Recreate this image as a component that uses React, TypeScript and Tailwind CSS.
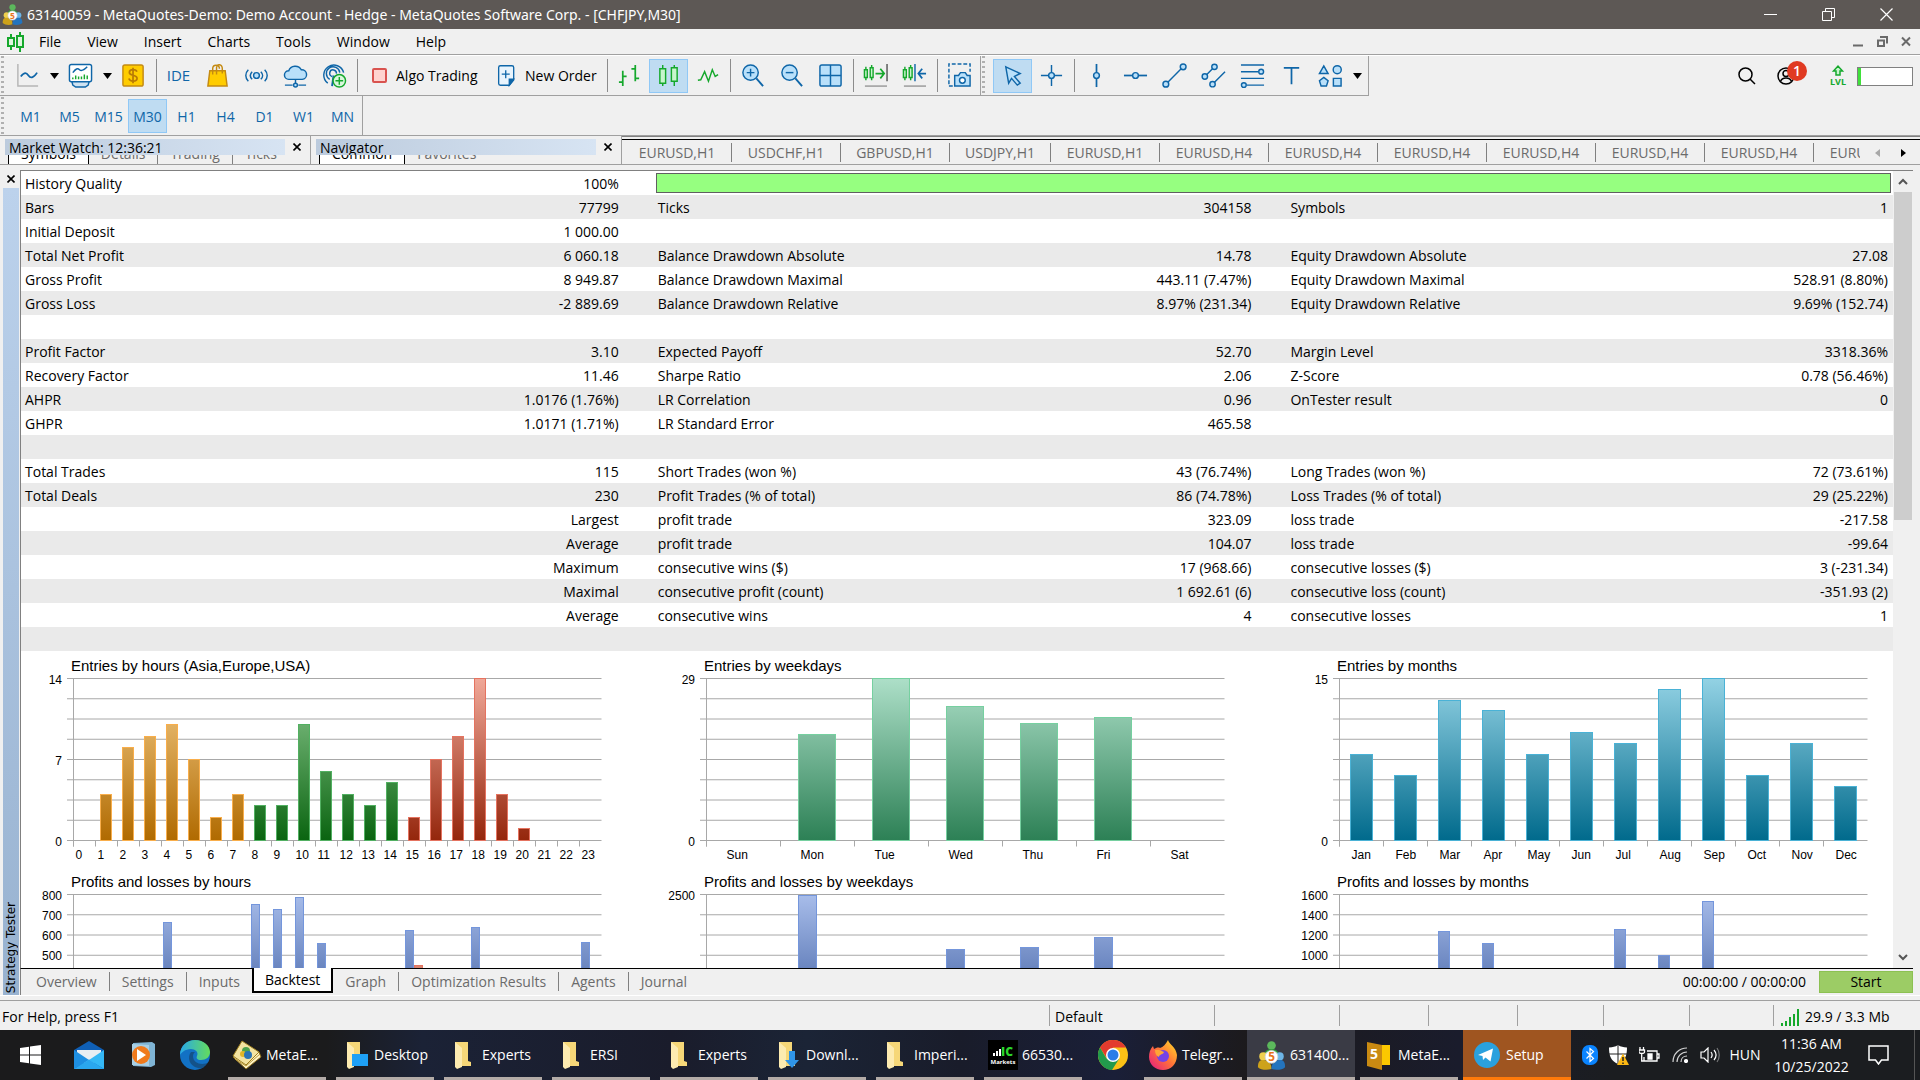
import React, { useState } from "react";

interface StatCell {
  label: string;
  value: string;
}

interface Bar {
  slot: number;
  value: number;
  color: string;
  offset?: number;
}

interface ChartProps {
  id: string;
  title: string;
  max: number;
  slotWidth: number;
  barWidth: number;
  barOffset: number;
  labelOffset: number;
  labels: string[];
  bars: Bar[];
  yLabels: { step: number; text: string }[];
}

const BLUE = "#0f66a8";
const LIGHT = "#b9e0fa";
const GREEN = "#15a82c";

const c = (label: string, value: string): StatCell => ({ label, value });
const empty = c("", "");

const stats: StatCell[][] = [
  [c("Bars", "77799"), c("Ticks", "304158"), c("Symbols", "1")],
  [c("Initial Deposit", "1 000.00"), empty, empty],
  [c("Total Net Profit", "6 060.18"), c("Balance Drawdown Absolute", "14.78"), c("Equity Drawdown Absolute", "27.08")],
  [c("Gross Profit", "8 949.87"), c("Balance Drawdown Maximal", "443.11 (7.47%)"), c("Equity Drawdown Maximal", "528.91 (8.80%)")],
  [c("Gross Loss", "-2 889.69"), c("Balance Drawdown Relative", "8.97% (231.34)"), c("Equity Drawdown Relative", "9.69% (152.74)")],
  [empty, empty, empty],
  [c("Profit Factor", "3.10"), c("Expected Payoff", "52.70"), c("Margin Level", "3318.36%")],
  [c("Recovery Factor", "11.46"), c("Sharpe Ratio", "2.06"), c("Z-Score", "0.78 (56.46%)")],
  [c("AHPR", "1.0176 (1.76%)"), c("LR Correlation", "0.96"), c("OnTester result", "0")],
  [c("GHPR", "1.0171 (1.71%)"), c("LR Standard Error", "465.58"), empty],
  [empty, empty, empty],
  [c("Total Trades", "115"), c("Short Trades (won %)", "43 (76.74%)"), c("Long Trades (won %)", "72 (73.61%)")],
  [c("Total Deals", "230"), c("Profit Trades (% of total)", "86 (74.78%)"), c("Loss Trades (% of total)", "29 (25.22%)")],
  [c("", "Largest"), c("profit trade", "323.09"), c("loss trade", "-217.58")],
  [c("", "Average"), c("profit trade", "104.07"), c("loss trade", "-99.64")],
  [c("", "Maximum"), c("consecutive wins ($)", "17 (968.66)"), c("consecutive losses ($)", "3 (-231.34)")],
  [c("", "Maximal"), c("consecutive profit (count)", "1 692.61 (6)"), c("consecutive loss (count)", "-351.93 (2)")],
  [c("", "Average"), c("consecutive wins", "4"), c("consecutive losses", "1")],
  [empty, empty, empty],
];

const palettes: Record<string, { top: string; bottom: string; line: string }> = {
  orange: { top: "#f5cd8a", bottom: "#b06a00", line: "#f9ae4b" },
  green: { top: "#8fcb92", bottom: "#0a6410", line: "#52b062" },
  red: { top: "#f0a898", bottom: "#94260c", line: "#e57360" },
  sea: { top: "#addfc8", bottom: "#2c8055", line: "#76d0a0" },
  teal: { top: "#93d2e4", bottom: "#006a8c", line: "#4ab2d6" },
  blue: { top: "#a8bdea", bottom: "#20438d", line: "#7496dc" },
  coral: { top: "#f0b8a8", bottom: "#b8452c", line: "#e57360" },
};

const entryHours = [0, 4, 8, 9, 10, 7, 2, 4, 3, 3, 10, 6, 4, 3, 5, 2, 7, 9, 14, 4, 1, 0, 0, 0];
const hourBars: Bar[] = entryHours.map((value, slot) => ({
  slot,
  value,
  color: slot < 8 ? "orange" : slot < 15 ? "green" : "red",
}));
const dayBars: Bar[] = [0, 19, 29, 24, 21, 22, 0].map((value, slot) => ({ slot, value, color: "sea" }));
const monthBars: Bar[] = [8, 6, 13, 12, 8, 10, 9, 14, 15, 6, 9, 5].map((value, slot) => ({ slot, value, color: "teal" }));

const profitHours: Bar[] = [
  { slot: 4, value: 663, color: "blue" },
  { slot: 8, value: 750, color: "blue" },
  { slot: 9, value: 727, color: "blue" },
  { slot: 10, value: 787, color: "blue" },
  { slot: 11, value: 560, color: "blue" },
  { slot: 15, value: 624, color: "blue" },
  { slot: 15, value: 450, color: "coral", offset: 9 },
  { slot: 18, value: 638, color: "blue" },
  { slot: 23, value: 565, color: "blue" },
];
const profitDays: Bar[] = [
  { slot: 1, value: 2480, color: "blue" },
  { slot: 3, value: 1652, color: "blue" },
  { slot: 4, value: 1675, color: "blue" },
  { slot: 5, value: 1840, color: "blue" },
];
const profitMonths: Bar[] = [
  { slot: 2, value: 1235, color: "blue" },
  { slot: 3, value: 1120, color: "blue" },
  { slot: 6, value: 1257, color: "blue" },
  { slot: 7, value: 998, color: "blue" },
  { slot: 8, value: 1530, color: "blue" },
];

const hours = Array.from({ length: 24 }, (_, i) => String(i));
const days = ["Sun", "Mon", "Tue", "Wed", "Thu", "Fri", "Sat"];
const months = ["Jan", "Feb", "Mar", "Apr", "May", "Jun", "Jul", "Aug", "Sep", "Oct", "Nov", "Dec"];

const chartTabs = [
  "EURUSD,H1", "USDCHF,H1", "GBPUSD,H1", "USDJPY,H1", "EURUSD,H1", "EURUSD,H4",
  "EURUSD,H4", "EURUSD,H4", "EURUSD,H4", "EURUSD,H4", "EURUSD,H4", "EURUSD,H4",
];

const Chart: React.FC<ChartProps> = ({ id, title, max, slotWidth, barWidth, barOffset, labelOffset, labels, bars, yLabels }) => {
  const left = 52.5;
  const top = 27.5;
  const height = 162;
  const bottom = top + height;
  const right = left + slotWidth * labels.length;

  return (
    <svg width="633" height="216" className="block shrink-0 font-['Liberation_Sans',sans-serif]">
      <defs>
        {Object.entries(palettes).map(([name, p]) => (
          <linearGradient key={name} id={`${id}-${name}`} gradientUnits="userSpaceOnUse" x1="0" y1={top} x2="0" y2={bottom}>
            <stop offset="0" stopColor={p.top} />
            <stop offset="1" stopColor={p.bottom} />
          </linearGradient>
        ))}
      </defs>
      <text x="50" y="20" fontSize="15">{title}</text>
      {Array.from({ length: 9 }, (_, i) => (
        <line key={i} x1="46" x2={right} y1={top + (i * height) / 8} y2={top + (i * height) / 8} stroke="#a8a8a8" />
      ))}
      <line x1={left} x2={left} y1={top} y2={bottom + 6} stroke="#a8a8a8" />
      {labels.map((label, i) => (
        <g key={label}>
          <line x1={left + i * slotWidth} x2={left + i * slotWidth} y1={bottom} y2={bottom + 6} stroke="#a8a8a8" />
          <text x={left + i * slotWidth + labelOffset} y={bottom + 18} fontSize="12">{label}</text>
        </g>
      ))}
      {yLabels.map((l) => (
        <text key={l.text} x="41" y={top + (l.step * height) / 8 + 5} fontSize="12" textAnchor="end">{l.text}</text>
      ))}
      {bars.filter((b) => b.value > 0).map((b, i) => {
        const h = (b.value / max) * height;
        return (
          <rect
            key={i}
            x={left + b.slot * slotWidth + barOffset + (b.offset ?? 0)}
            y={Math.round(bottom - h - 0.5) + 0.5}
            width={barWidth}
            height={Math.round(h)}
            fill={`url(#${id}-${b.color})`}
            stroke={palettes[b.color].line}
          />
        );
      })}
    </svg>
  );
};

const Icon: React.FC<{ children: React.ReactNode; size?: number }> = ({ children, size = 25 }) => (
  <svg width={size} height={size} viewBox="0 0 26 26" fill="none" stroke={BLUE} strokeWidth="1.5" className="shrink-0">
    {children}
  </svg>
);

const ToolButton: React.FC<{ label: string; active?: boolean; children: React.ReactNode }> = ({ label, active, children }) => (
  <button
    aria-label={label}
    className={
      "flex h-[34px] w-[39px] shrink-0 items-center justify-center border " +
      (active ? "border-[#90c8f6] bg-[#bfdcf2]" : "border-transparent")
    }
  >
    {children}
  </button>
);

const Caret: React.FC<{ label: string }> = ({ label }) => (
  <button aria-label={label} className="flex w-[14px] shrink-0 items-center justify-center">
    <svg width="9" height="6"><path d="M0 0h9L4.500 6z" fill="#000" /></svg>
  </button>
);

const Separator: React.FC = () => (
  <div className="flex h-[33px] w-[6px] shrink-0 justify-center">
    <div className="w-px bg-[#8c8c8c]" />
  </div>
);

const Grip: React.FC = () => (
  <div className="ml-px w-[3px] self-stretch bg-[repeating-linear-gradient(180deg,#b0b0b0_0_2px,transparent_2px_5px)]" />
);

// MetaTrader emblem: three people around a coin
const MetaTraderLogo: React.FC<{ size: number }> = ({ size }) => (
  <svg width={size} height={size} viewBox="0 0 30 32" className="shrink-0">
    <circle cx="15" cy="5" r="4.800" fill="#5cb85c" />
    <path d="M7 17c0-6 3-8 8-8s8 2 8 8z" fill="#2f9e3a" />
    <circle cx="6" cy="17" r="4.500" fill="#eed04e" />
    <path d="M0 29c0-6 2-8 6-8 5 0 9 3 9 10-5 1.500-12 1-15-2z" fill="#cda21a" />
    <circle cx="24" cy="17" r="4.500" fill="#6db5e6" />
    <path d="M30 29c0-6-2-8-6-8-5 0-9 3-9 10 5 1.500 12 1 15-2z" fill="#2474bd" />
    <circle cx="15" cy="17.500" r="7" fill="#fff" stroke="#d5d5d5" />
    <text x="15" y="22.500" fontSize="13" fontWeight="700" textAnchor="middle" fill="#e8731c">5</text>
  </svg>
);

const TitleBar: React.FC = () => (
  <header className="flex h-[29px] shrink-0 items-center bg-[#5d5855] pr-[5px] text-white">
    <div className="flex w-[27px] pl-[2px]"><MetaTraderLogo size={21} /></div>
    <h1 className="flex-1 text-sm font-normal font-['Noto_Sans',sans-serif]">63140059 - MetaQuotes-Demo: Demo Account - Hedge - MetaQuotes Software Corp. - [CHFJPY,M30]</h1>
    <button aria-label="Minimize" className="flex w-[58px] justify-center">
      <svg width="13" height="13" stroke="#fff"><path d="M0 6.500h13" /></svg>
    </button>
    <button aria-label="Restore" className="flex w-[58px] justify-center">
      <svg width="13" height="13" stroke="#fff" fill="none"><path d="M.5 3.500h9v9h-9zM3.500 3V.5h9v9H10" /></svg>
    </button>
    <button aria-label="Close" className="flex w-[58px] justify-center">
      <svg width="13" height="13" stroke="#fff" strokeWidth="1.200"><path d="M.5.5l12 12M12.500.5l-12 12" /></svg>
    </button>
  </header>
);

const MenuBar: React.FC = () => (
  <nav className="flex h-[26px] shrink-0 items-center border-b border-b-[#a0a0a0] pr-[2px] text-sm">
    <div className="flex w-[26px] pl-[7px]">
      <svg width="18" height="20" fill="none" stroke={GREEN} strokeWidth="2">
        <path d="M4 2v4M4 14v4M13 0v4M13 15v5" />
        <path d="M1 6h6v8H1z" fill="#dff6df" />
        <path d="M10 4h6v11h-6z" fill="#dff6df" />
      </svg>
    </div>
    {["File", "View", "Insert", "Charts", "Tools", "Window", "Help"].map((item) => (
      <button key={item} className="px-[13px]">{item}</button>
    ))}
    <div className="ml-auto flex">
      <button aria-label="Minimize chart" className="flex w-6 justify-center">
        <svg width="11" height="11"><path d="M0 9.500h10" stroke="#6a6a6a" strokeWidth="2" /></svg>
      </button>
      <button aria-label="Restore chart" className="flex w-6 justify-center">
        <svg width="11" height="11" fill="none" stroke="#6a6a6a" strokeWidth="2"><path d="M1 4.500h6v5.500H1zM3 1h7v6.500" /></svg>
      </button>
      <button aria-label="Close chart" className="flex w-6 justify-center">
        <svg width="10" height="11" stroke="#6a6a6a" strokeWidth="2"><path d="M1 1.500l8 8M9 1.500l-8 8" /></svg>
      </button>
    </div>
  </nav>
);

const Toolbar: React.FC = () => (
  <div className="flex h-[41px] shrink-0 items-stretch border-t border-t-white text-sm">
    <div className="flex items-center border-r border-b border-[#a0a0a0] pr-px">
      <Grip />
      <div className="w-1" />
      <ToolButton label="Line studies">
        <Icon><path d="M3 1v23h21" stroke="#b5b5b5" /><path d="M6 14c4-5 6-4 8-1s5 3 9-3" strokeWidth="1.800" /></Icon>
      </ToolButton>
      <Caret label="More charts" />
      <ToolButton label="Indicators">
        <Icon>
          <path d="M4 19l1 4 3 2h10l3-2 1-4" fill="#cfe3f2" />
          <rect x="1.500" y="1.500" width="23" height="18" rx="2" fill="#fff" />
          <path d="M5 10c3-4 5-5 7-3s4 1 8-3" />
          <path d="M5 17v-2M8 17v-4M11 17v-3M14 17v-3M17 17v-5M20 17v-4" stroke={GREEN} />
        </Icon>
      </ToolButton>
      <Caret label="More indicators" />
      <ToolButton label="Trade levels">
        <Icon>
          <rect x="2" y="2" width="21" height="22" rx="2" fill="#fc0" stroke="#c48a12" />
          <path d="M16.500 9c-.5-1.600-2-2-4-2-2.500 0-3.800 1-3.800 2.800 0 4 8 1.800 8 6 0 2-1.700 3-4.200 3-2.200 0-3.800-.8-4.300-2.600M12.500 5v16" stroke="#b97a05" strokeWidth="1.800" />
        </Icon>
      </ToolButton>
      <Separator />
      <button className="h-[34px] w-[39px] text-[15px] text-[#0f66a8]">IDE</button>
      <ToolButton label="Market">
        <Icon>
          <path d="M5 8h16l2 16H3z" fill="#fc0" stroke="#c48a12" />
          <path d="M8 12V6c0-5 7-5 7 0M12 12V5c0-5 6-4 6 1v5" stroke="#c48a12" />
        </Icon>
      </ToolButton>
      <ToolButton label="Signals">
        <Icon>
          <circle cx="13" cy="13" r="3" fill={LIGHT} />
          <path d="M8.500 9c-2.500 2.500-2.500 5.500 0 8M17.500 9c2.500 2.500 2.500 5.500 0 8M4.500 7c-3.500 3.500-3.500 8.500 0 12M21.500 7c3.500 3.500 3.500 8.500 0 12" />
        </Icon>
      </ToolButton>
      <ToolButton label="Virtual hosting">
        <Icon>
          <path d="M6 17a4.500 4.500 0 0 1 0-9 7 6.500 0 0 1 13-1 5 5 0 0 1 1 10z" fill={LIGHT} />
          <path d="M13 17v4M2 23h8M16 23h8" /><circle cx="13" cy="23" r="2" fill={LIGHT} />
        </Icon>
      </ToolButton>
      <ToolButton label="Copy trading">
        <Icon>
          <path d="M6 21A10.500 10.500 0 1 1 22.500 10M8 17A7 7 0 1 1 18.500 10M10.500 14a3.500 3.500 0 1 1 4.500-3" />
          <path d="M12 13l-1.500 11" strokeWidth="2" />
          <circle cx="18" cy="18.500" r="6.500" fill="#d9f7dc" stroke={GREEN} /><path d="M18 14.500v8M14 18.500h8" stroke={GREEN} />
        </Icon>
      </ToolButton>
      <Separator />
      <button className="flex h-[34px] w-[128px] items-center gap-[9px] pl-[12px]">
        <span className="h-[15px] w-[15px] rounded-[2px] border-2 border-[#d9534f] bg-[#ffd3cf]" />
        Algo Trading
      </button>
      <button className="flex h-[34px] w-[116px] items-center gap-[6px] pl-[8px]">
        <Icon size={23}>
          <path d="M5 2h13a2 2 0 0 1 2 2v14l-5 6H5a2 2 0 0 1-2-2V4a2 2 0 0 1 2-2z" fill="#e8f4fd" />
          <path d="M20 17h-5v7z" fill={BLUE} /><path d="M11 7v9M6.500 11.500h9" />
        </Icon>
        New Order
      </button>
      <Separator />
      <ToolButton label="Bar chart">
        <Icon><path d="M6 8v16M6 14h4M2 20h4M19 2v17M15 6h4M19 16h4" stroke={GREEN} strokeWidth="1.800" /></Icon>
      </ToolButton>
      <ToolButton label="Candlesticks" active>
        <Icon>
          <path d="M7 2v22M19 2v22" stroke={GREEN} />
          <path d="M4 6h6v15H4zM16 5h6v14h-6z" fill="#c8f5cd" stroke={GREEN} />
        </Icon>
      </ToolButton>
      <ToolButton label="Line chart">
        <Icon><path d="M3 18l3-.5 4-8.500 4 10 4-12 3 7 3-2" stroke={GREEN} /></Icon>
      </ToolButton>
      <Separator />
      <ToolButton label="Zoom in">
        <Icon><circle cx="11" cy="10" r="8" fill={LIGHT} /><path d="M17 16l7 8" strokeWidth="2" /><path d="M11 6v8M7 10h8" /></Icon>
      </ToolButton>
      <ToolButton label="Zoom out">
        <Icon><circle cx="11" cy="10" r="8" fill={LIGHT} /><path d="M17 16l7 8" strokeWidth="2" /><path d="M7 10h8" /></Icon>
      </ToolButton>
      <ToolButton label="Tile windows">
        <Icon><rect x="2" y="2" width="22" height="22" rx="2" fill={LIGHT} /><path d="M13 2v22M2 13h22" /></Icon>
      </ToolButton>
      <Separator />
      <ToolButton label="Auto scroll">
        <Icon>
          <path d="M3 4v14M9 2v16" stroke={GREEN} /><path d="M1.500 7h3v8h-3zM7.500 5h3v10h-3z" fill="#c8f5cd" stroke={GREEN} />
          <path d="M13 11h9M18 6l4 5-4 5" stroke={GREEN} strokeWidth="1.800" /><path d="M25 1v18" stroke="#555" /><path d="M2 24h23" stroke="#999" />
        </Icon>
      </ToolButton>
      <ToolButton label="Chart shift">
        <Icon>
          <path d="M3 4v14M9 2v16" stroke={GREEN} /><path d="M1.500 7h3v8h-3zM7.500 5h3v10h-3z" fill="#c8f5cd" stroke={GREEN} />
          <path d="M13.500 1v18" /><path d="M25 11h-8M21 6l-4 5 4 5" strokeWidth="1.800" /><path d="M2 24h23" stroke="#999" />
        </Icon>
      </ToolButton>
      <Separator />
      <ToolButton label="Screenshot">
        <Icon>
          <path d="M6 24H2V1h22v8" strokeDasharray="4 2" />
          <path d="M8 13h4l2-3h5l2 3h3v11H8z" fill={LIGHT} /><circle cx="16" cy="18" r="3" fill="#fff" />
        </Icon>
      </ToolButton>
    </div>
    <div className="flex items-center border-r border-b border-[#a0a0a0] pr-[4px]">
      <Grip />
      <div className="w-2" />
      <ToolButton label="Cursor" active>
        <Icon><path d="M6 4l15 7-6 3 6 7-3 2-6-7-3 5z" fill={LIGHT} /></Icon>
      </ToolButton>
      <ToolButton label="Crosshair">
        <Icon><path d="M13 2v22M2 13h22" /><circle cx="13" cy="13" r="3" fill={LIGHT} /></Icon>
      </ToolButton>
      <Separator />
      <ToolButton label="Vertical line">
        <Icon><path d="M13 1v24" strokeWidth="1.800" /><circle cx="13" cy="13" r="3" fill={LIGHT} /></Icon>
      </ToolButton>
      <ToolButton label="Horizontal line">
        <Icon><path d="M1 13h24" strokeWidth="1.800" /><circle cx="13" cy="13" r="3" fill={LIGHT} /></Icon>
      </ToolButton>
      <ToolButton label="Trendline">
        <Icon><path d="M4 22L22 4" /><circle cx="4" cy="22" r="3" fill={LIGHT} /><circle cx="22" cy="4" r="3" fill={LIGHT} /></Icon>
      </ToolButton>
      <ToolButton label="Channel">
        <Icon>
          <path d="M4 14L14 4M12 22L25 9" />
          <circle cx="4" cy="14" r="2.800" fill={LIGHT} /><circle cx="14" cy="4" r="2.800" fill={LIGHT} /><circle cx="12" cy="22" r="2.800" fill={LIGHT} />
        </Icon>
      </ToolButton>
      <ToolButton label="Fibonacci">
        <Icon>
          <path d="M1 2h24M1 9h18M1 16h24M7 23h18" />
          <circle cx="22" cy="9" r="2.500" fill={LIGHT} /><circle cx="4" cy="23" r="2.500" fill={LIGHT} />
        </Icon>
      </ToolButton>
      <ToolButton label="Text">
        <Icon><path d="M5 5h16M13 5v17" strokeWidth="1.800" /></Icon>
      </ToolButton>
      <ToolButton label="Shapes">
        <Icon>
          <path d="M6 3l4.500 8h-9zM6 15l4.500 3.500-1.700 5.500H3.200L1.500 18.500zM16 16h8v8h-8z" fill={LIGHT} /><circle cx="20" cy="7" r="4.200" fill={LIGHT} />
        </Icon>
      </ToolButton>
      <Caret label="More shapes" />
    </div>
    <div className="ml-auto flex items-center pr-[7px]">
      <button aria-label="Search" className="flex w-[39px] justify-center">
        <svg width="18" height="18" fill="none" stroke="#000" strokeWidth="1.500"><circle cx="7.500" cy="7.500" r="6.500" /><path d="M12 12l5 5" /></svg>
      </button>
      <button aria-label="Account, 1 message" className="relative flex w-[39px] justify-center">
        <svg width="18" height="18" fill="none" stroke="#000" strokeWidth="1.500">
          <circle cx="9" cy="9" r="8" /><circle cx="9" cy="6.500" r="3" /><path d="M3.500 14.500c1-3 3-3.500 5.500-3.500s4.500.5 5.500 3.500" />
        </svg>
        <span className="absolute -top-[6px] left-[21px] flex h-5 w-5 items-center justify-center rounded-full bg-[#e03a22] text-sm font-semibold text-white">1</span>
      </button>
      <div className="ml-[13px] flex w-[39px] justify-center">
        <svg width="24" height="24" fill="none" stroke={GREEN} strokeWidth="1.500">
          <path d="M10 11V7H7.500L12 2l4.500 5H14v4z" fill="#c8f5cd" />
          <text x="12" y="21" fontSize="9" fontWeight="700" textAnchor="middle" fill={GREEN} stroke="none">LVL</text>
        </svg>
      </div>
      <div className="flex h-[19px] w-[56px] border border-[#808080] bg-white">
        <div className="w-[3px] bg-[#3fe03a]" />
      </div>
    </div>
  </div>
);

const Timeframes: React.FC = () => {
  const [frame, setFrame] = useState("M30");
  return (
    <div className="flex h-10 shrink-0 border-b border-b-[#a0a0a0] text-[#0f66a8]">
      <div className="flex items-center border-r border-r-[#a0a0a0] pt-px">
        <Grip />
        <div className="w-[7px]" />
        {["M1", "M5", "M15", "M30", "H1", "H4", "D1", "W1", "MN"].map((f) => (
          <button
            key={f}
            onClick={() => setFrame(f)}
            className={
              "h-[34px] w-[39px] border pt-px text-sm " +
              (f === frame ? "border-[#90c8f6] bg-[#bfdcf2]" : "border-transparent")
            }
          >
            {f}
          </button>
        ))}
      </div>
    </div>
  );
};

const CloseMark: React.FC<{ label: string }> = ({ label }) => (
  <button aria-label={label} className="flex w-5 items-center justify-center">
    <svg width="8" height="8" stroke="#000" strokeWidth="1.600"><path d="M.5.5l7 7M7.500.5l-7 7" /></svg>
  </button>
);

const DockPanel: React.FC<{ title: string; tabs: string[] }> = ({ title, tabs }) => (
  <section className="flex w-[311px] shrink-0 flex-col border-r border-r-[#a0a0a0] pt-[3px] pl-[5px]">
    <div className="flex h-4 justify-between pr-[3px]">
      <h2 className="w-[280px] bg-linear-to-r from-[#bccbdd] to-[#d7e4f3] pl-1 text-sm leading-[17px]">{title}</h2>
      <CloseMark label={`Close ${title}`} />
    </div>
    <div className="flex h-[9px] items-end overflow-hidden pl-[3px] text-sm leading-5 text-[#6b6b6b]">
      {tabs.map((tab, i) => (
        <button
          key={tab}
          className={
            "h-5 border-r px-[12px] pb-[2px] " +
            (i === 0 ? "border-l border-black bg-white text-black" : i < tabs.length - 1 ? "border-r-[#808080]" : "border-transparent")
          }
        >
          {tab}
        </button>
      ))}
    </div>
  </section>
);

const Docks: React.FC = () => (
  <div className="flex h-[29px] shrink-0 border-b border-b-[#a0a0a0]">
    <DockPanel title="Market Watch: 12:36:21" tabs={["Symbols", "Details", "Trading", "Ticks"]} />
    <DockPanel title="Navigator" tabs={["Common", "Favorites"]} />
    <div className="flex min-w-0 flex-1 border-t border-t-[#808080] pt-[2px]">
      <div className="flex min-w-0 flex-1 items-center border-t border-t-black pt-px pl-px">
        <div className="flex min-w-0 flex-1 overflow-hidden text-sm text-[#6b6b6b]">
          {chartTabs.map((tab, i) => (
            <button
              key={i}
              className={
                "h-[19px] shrink-0 border-r border-r-[#808080] leading-[19px] " +
                (tab.startsWith("USDJPY") ? "w-[101px]" : "w-[109px]")
              }
            >
              {tab}
            </button>
          ))}
        </div>
        <div className="flex w-[60px] shrink-0 items-center justify-center gap-[21px]">
          <button aria-label="Previous tabs"><svg width="5" height="8"><path d="M5 0v8L0 4z" fill="#a8a8a8" /></svg></button>
          <button aria-label="Next tabs"><svg width="5" height="8"><path d="M0 0v8l5-4z" fill="#000" /></svg></button>
        </div>
      </div>
    </div>
  </div>
);

const StatsTable: React.FC = () => (
  <table className="w-full table-fixed text-sm">
    <colgroup>
      <col className="w-[16.9%]" />
      <col className="w-[16.9%]" />
      <col className="w-[16.9%]" />
      <col className="w-[16.9%]" />
      <col className="w-[16.2%]" />
      <col className="w-[16.2%]" />
    </colgroup>
    <tbody>
      <tr className="h-6">
        <td className="pt-[2px] pl-1">History Quality</td>
        <td className="pt-[2px] pr-[35px] text-right">100%</td>
        <td colSpan={4} className="p-0 pr-[2px] pl-[2px]">
          <div className="h-5 border border-[#606060] bg-[#96ff80]" />
        </td>
      </tr>
      {stats.map((row, i) => (
        <tr key={i} className="h-6 odd:bg-white even:bg-[#eaeaea]">
          {row.map((cell, j) => (
            <React.Fragment key={j}>
              <td className="pt-[2px] pl-1 whitespace-nowrap">{cell.label}</td>
              <td className={"pt-[2px] text-right whitespace-nowrap " + (j < 2 ? "pr-[35px]" : "pr-[5px]")}>{cell.value}</td>
            </React.Fragment>
          ))}
        </tr>
      ))}
    </tbody>
  </table>
);

const Report: React.FC = () => (
  <div className="flex min-h-0 flex-1 border-t border-l border-t-[#808080] border-l-[#808080] bg-white">
    <div className="min-w-0 flex-1 overflow-hidden">
      <StatsTable />
      <div className="grid grid-cols-[633fr_633fr_606fr]">
        <div className="min-w-0">
          <Chart id="eh" title="Entries by hours (Asia,Europe,USA)" max={14} slotWidth={22} barWidth={11} barOffset={5} labelOffset={2} labels={hours} bars={hourBars}
            yLabels={[{ step: 0, text: "14" }, { step: 4, text: "7" }, { step: 8, text: "0" }]} />
          <Chart id="ph" title="Profits and losses by hours" max={800} slotWidth={22} barWidth={8} barOffset={2} labelOffset={2} labels={hours} bars={profitHours}
            yLabels={[{ step: 0, text: "800" }, { step: 1, text: "700" }, { step: 2, text: "600" }, { step: 3, text: "500" }]} />
        </div>
        <div className="min-w-0">
          <Chart id="ed" title="Entries by weekdays" max={29} slotWidth={74} barWidth={37} barOffset={18} labelOffset={20} labels={days} bars={dayBars}
            yLabels={[{ step: 0, text: "29" }, { step: 8, text: "0" }]} />
          <Chart id="pd" title="Profits and losses by weekdays" max={2500} slotWidth={74} barWidth={18} barOffset={18} labelOffset={20} labels={days} bars={profitDays}
            yLabels={[{ step: 0, text: "2500" }]} />
        </div>
        <div className="min-w-0">
          <Chart id="em" title="Entries by months" max={15} slotWidth={44} barWidth={22} barOffset={11} labelOffset={12} labels={months} bars={monthBars}
            yLabels={[{ step: 0, text: "15" }, { step: 8, text: "0" }]} />
          <Chart id="pm" title="Profits and losses by months" max={1600} slotWidth={44} barWidth={11} barOffset={11} labelOffset={12} labels={months} bars={profitMonths}
            yLabels={[{ step: 0, text: "1600" }, { step: 1, text: "1400" }, { step: 2, text: "1200" }, { step: 3, text: "1000" }]} />
        </div>
      </div>
    </div>
    <div className="flex w-[20px] shrink-0 flex-col items-center bg-[#f0f0f0]">
      <button aria-label="Scroll up" className="flex h-[21px] items-center">
        <svg width="10" height="7" fill="none" stroke="#555" strokeWidth="2"><path d="M1 6l4-4 4 4" /></svg>
      </button>
      <div className="h-[328px] w-[18px] bg-[#cdcdcd]" />
      <button aria-label="Scroll down" className="mt-auto flex h-[21px] items-center">
        <svg width="10" height="7" fill="none" stroke="#555" strokeWidth="2"><path d="M1 1l4 4 4-4" /></svg>
      </button>
    </div>
  </div>
);

const Tester: React.FC = () => {
  const [tab, setTab] = useState("Backtest");
  const tabs = ["Overview", "Settings", "Inputs", "Backtest", "Graph", "Optimization Results", "Agents", "Journal"];
  return (
    <section className="flex min-h-0 flex-1 border-b border-b-white pt-[5px] pr-[7px]">
      <div className="flex w-[20px] shrink-0 flex-col items-center pr-px pl-[3px]">
        <div className="flex h-[18px] items-center"><CloseMark label="Close tester" /></div>
        <div className="flex w-full min-h-0 flex-1 items-end justify-center bg-linear-to-b from-[#bcd2ec] to-[#98b2d0]">
          <h2 className="rotate-180 pt-[2px] text-xs leading-4 whitespace-nowrap [writing-mode:vertical-rl] font-['DejaVu_Sans',sans-serif]">Strategy Tester</h2>
        </div>
      </div>
      <div className="flex min-w-0 flex-1 flex-col">
        <Report />
        <div className="flex h-[27px] shrink-0 border-t border-l border-t-black border-l-[#808080] pl-[3px] text-sm text-[#6b6b6b]">
          {tabs.map((t, i) => (
            <button
              key={t}
              onClick={() => setTab(t)}
              className={
                t === tab
                  ? "-mt-px h-[25px] border-2 border-t-0 border-black bg-white px-[11px] text-black"
                  : "flex h-[25px] items-center"
              }
            >
              <span className={t === tab ? "" : "px-[12px]"}>{t}</span>
              {t !== tab && tabs[i + 1] !== tab && i < tabs.length - 1 && <span className="h-[19px] w-px bg-[#808080]" />}
            </button>
          ))}
          <span className="mr-[13px] ml-auto self-center text-black">00:00:00 / 00:00:00</span>
          <button className="mt-[2px] h-[22px] w-[94px] border border-[#8cc152] bg-[#9ccc65] text-black">Start</button>
        </div>
      </div>
    </section>
  );
};

const StatusBar: React.FC = () => {
  const cell = "my-[4px] shrink-0 border-l border-l-[#a0a0a0]";
  return (
    <footer className="mt-[4px] flex h-[30px] shrink-0 items-stretch border-t border-t-[#a0a0a0] text-sm">
      <div className="flex flex-1 items-center pt-[3px] pl-[2px]">For Help, press F1</div>
      <div className={cell + " flex w-[165px] items-center pt-[3px] pl-[5px]"}>Default</div>
      <div className={cell + " w-[125px]"} />
      <div className={cell + " w-[89px]"} />
      <div className={cell + " w-[89px]"} />
      <div className={cell + " w-[86px]"} />
      <div className={cell + " w-[86px]"} />
      <div className={cell + " w-[84px]"} />
      <div className={cell + " flex w-[147px] items-center gap-[6px] pt-[3px] pl-[7px]"}>
        <svg width="18" height="17" stroke={GREEN} strokeWidth="2"><path d="M1 17v-3M5 17v-5M9 17V8M13 17V5M17 17V0" /></svg>
        29.9 / 3.3 Mb
      </div>
    </footer>
  );
};

const Folder: React.FC<{ badge?: React.ReactNode }> = ({ badge }) => (
  <svg width="26" height="28" viewBox="0 0 26 28">
    <path d="M5 1h13v19l3 1v4H7z" fill="#f6d778" />
    <path d="M5 1l7 6v19l-5 2-2-2z" fill="#fdebb0" />
    {badge}
  </svg>
);

const EditorBook: React.FC = () => (
  <svg width="30" height="30" viewBox="0 0 30 30">
    <path d="M1 17L14 29l15-12-2-5z" fill="#fff3c4" stroke="#8a6d1c" />
    <path d="M3 19l11 7 14-12" fill="none" stroke="#b99a3a" />
    <path d="M10 1l17 11-13 13L1 16z" fill="#f3e3a0" stroke="#9a7c1e" />
    <circle cx="14" cy="11" r="4" fill="#4da24c" /><circle cx="11" cy="14" r="3" fill="#e0b527" /><circle cx="16" cy="15" r="4" fill="#2a73b5" />
  </svg>
);

const tasks: { label: string; icon: React.ReactNode }[] = [
  { label: "MetaE...", icon: <EditorBook /> },
  { label: "Desktop", icon: <Folder badge={<path d="M10 13h16v12H10z" fill="#1ea0f5" />} /> },
  { label: "Experts", icon: <Folder /> },
  { label: "ERSI", icon: <Folder /> },
  { label: "Experts", icon: <Folder /> },
  { label: "Downl...", icon: <Folder badge={<path d="M15 10h6v9h4l-7 8-7-8h4z" fill="#2f95e8" />} /> },
  { label: "Imperi...", icon: <Folder /> },
  {
    label: "66530...",
    icon: (
      <svg width="30" height="30" viewBox="0 0 30 30">
        <path d="M0 0h30v30H0z" fill="#000" />
        <path d="M6 16v-3M9 16v-5M12 16V9" stroke="#fff" strokeWidth="2" />
        <text x="13" y="16" fontSize="12" fontWeight="800" fill="#2bd62b">IC</text>
        <text x="15" y="24" fontSize="6" fontWeight="700" textAnchor="middle" fill="#fff">Markets</text>
      </svg>
    ),
  },
];

const TaskItem: React.FC<{ label: string; icon: React.ReactNode; tone?: string; underline?: string }> = ({ label, icon, tone = "", underline = "mx-[5px] bg-[#b3aba7]" }) => (
  <button className={"flex w-[108px] shrink-0 flex-col " + tone}>
    <span className="flex w-full flex-1 items-center pt-[3px] pl-[8px]">
      <span className="flex w-[32px] shrink-0 justify-center">{icon}</span>
      <span className="pl-[3px] whitespace-nowrap">{label}</span>
    </span>
    <span className={"h-[3px] self-stretch " + underline} />
  </button>
);

const Taskbar: React.FC = () => (
  <div className="flex h-[50px] shrink-0 bg-[linear-gradient(90deg,#1b1b1c_0,#1b1b1c_17%,#1b2236_22%,#1a1c2b_35%,#1b2436_42%,#191c2a_50%,#1a1f38_58%,#1c1a1c_65%,#1a1c2c_76%,#1b1d20_84%)] text-sm text-white">
    <button aria-label="Start" className="flex w-[60px] shrink-0 items-center justify-center">
      <svg width="21" height="20" fill="#fff"><path d="M0 3l9-1.300V9.500H0zM10 1.500L21 0v9.500H10zM0 10.500h9v7.800L0 17zM10 10.500h11V20l-11-1.500z" /></svg>
    </button>
    <button aria-label="Mail" className="flex w-[58px] shrink-0 items-center justify-center">
      <svg width="30" height="28"><path d="M0 9L15 0l15 9v19H0z" fill="#0f5fb5" /><path d="M3 9h24v9L15 24 3 18z" fill="#e9eef2" /><path d="M0 9l15 10L0 28z" fill="#1e8fe1" /><path d="M30 9L15 19l15 9z" fill="#35b8f5" /><path d="M0 28l15-9.500L30 28z" fill="#2aa7ee" /></svg>
    </button>
    <button aria-label="Media player" className="flex w-[49px] shrink-0 items-center justify-center">
      <svg width="26" height="26"><path d="M3 1l19-1 3 2v21l-4 2-18-1z" fill="#7fb4d4" /><path d="M2 2l17 1v21L2 23z" fill="#a9cfe4" /><circle cx="11" cy="13" r="9" fill="#f07a1c" /><path d="M7 7l9 6-9 6z" fill="#fff" /></svg>
    </button>
    <button aria-label="Edge" className="flex w-[56px] shrink-0 items-center justify-center">
      <svg width="30" height="30" viewBox="0 0 30 30">
        <defs>
          <linearGradient id="edgeTop" x1="0" y1="0" x2="1" y2="0"><stop offset="0" stopColor="#28a8e8" /><stop offset="1" stopColor="#64dc5c" /></linearGradient>
        </defs>
        <circle cx="15" cy="15" r="15" fill="#1271c4" />
        <path d="M0 15C0 5 8 0 15 0c9 0 15 6 15 12 0 5-4 8-9 8-4 0-5-2-4-4 2-4-2-7-6-7-6 0-10 4-11 6z" fill="url(#edgeTop)" />
        <path d="M11 12c-4 5-2 14 7 16 5 1 8-1 11-6-6 4-16 2-16-6 0-2 1-3 2-4z" fill="#1b1b1c" opacity=".35" />
      </svg>
    </button>
    {tasks.map((t, i) => <TaskItem key={i} {...t} />)}
    <button aria-label="Chrome" className="flex w-[52px] shrink-0 items-center justify-center">
      <svg width="30" height="30" viewBox="0 0 30 30">
        <circle cx="15" cy="15" r="15" fill="#fbc116" />
        <path d="M2 7.500A15 15 0 0 1 28 7.500H15L9 18.500z" fill="#e33b2e" />
        <path d="M2 7.500A15 15 0 0 0 14 30l7-11-12.500-.5z" fill="#229a4c" />
        <circle cx="15" cy="15" r="7" fill="#fff" /><circle cx="15" cy="15" r="5.500" fill="#2b7de9" />
      </svg>
    </button>
    <TaskItem
      label="Telegr..."
      icon={
        <svg width="28" height="30" viewBox="0 0 28 30">
          <defs>
            <linearGradient id="fox" x1="1" y1="0" x2="0" y2="1"><stop offset="0" stopColor="#ffe226" /><stop offset=".5" stopColor="#ff7139" /><stop offset="1" stopColor="#e31587" /></linearGradient>
          </defs>
          <path d="M19 0c1 4 8 7 9 15 0 9-6 15-14 15S0 24 0 17c0-4 1-8 4-11l1 3c2-1 4-2 6-1 3-1 6-4 8-8z" fill="url(#fox)" />
          <circle cx="14" cy="16" r="6" fill="#7542e5" /><path d="M6 10c4-1 6 1 9 2-1 3-5 2-5 5-3-1-4-4-4-7z" fill="#ffa436" />
        </svg>
      }
    />
    <TaskItem label="631400..." icon={<MetaTraderLogo size={29} />} tone="bg-[#3a3b45]" underline="bg-[#b3aba7]" />
    <TaskItem
      label="MetaE..."
      icon={
        <svg width="26" height="30" viewBox="0 0 26 30">
          <path d="M11 5h13v20H11z" fill="#fcc800" /><path d="M1 2l15 3v25L1 26z" fill="#c98a12" />
          <text x="8" y="19" fontSize="14" fontWeight="700" textAnchor="middle" fill="#fff">5</text>
        </svg>
      }
    />
    <TaskItem
      label="Setup"
      tone="bg-[#9f5520]"
      underline="bg-[#ff7a0a]"
      icon={<svg width="26" height="26" viewBox="0 0 26 26"><circle cx="13" cy="13" r="13" fill="#2aa1de" /><path d="M4 13l15-6.500-2.500 13-5-4L9 18l-.5-4z" fill="#fff" /></svg>}
    />
    <div className="ml-auto flex shrink-0 items-center">
      <button aria-label="Bluetooth" className="flex w-7 justify-center">
        <svg width="16" height="20"><rect width="16" height="20" rx="7" fill="#0a84ff" /><path d="M4.500 6.500l7 7L8 16.500v-13l3.500 3-7 7" fill="none" stroke="#fff" strokeWidth="1.200" /></svg>
      </button>
      <button aria-label="Security" className="flex w-[30px] justify-center">
        <svg width="20" height="20"><path d="M9 0c3 2 5 2 9 2.500C18 11 16 16 9 19 2 16 0 11 0 2.500 4 2 6 2 9 0z" fill="#fff" /><path d="M9 0v19M0 9h18" stroke="#222" /><path d="M14 8.500L20 20H8z" fill="#fdb813" /><path d="M14 12v4M14 17.500v1.500" stroke="#222" strokeWidth="1.500" /></svg>
      </button>
      <button aria-label="Battery" className="flex w-[31px] justify-center">
        <svg width="21" height="16" fill="none" stroke="#fff" strokeWidth="1.300"><path d="M8 4h10v10H5v-4M18 7h2v4h-2M1 0v3M4.500 0v3M0 3h5.500v2c0 2-5.500 2-5.500 0zM2.700 6v8h3" /><path d="M9 7h4v5H9z" fill="#fff" /></svg>
      </button>
      <button aria-label="Network" className="flex w-[30px] justify-center">
        <svg width="16" height="16" fill="none" stroke="#fff" strokeWidth="1.200"><path d="M1 15C1 7 7 1 15 1M5 15C5 9.500 9.500 5 15 5M9 15c0-3.500 2.500-6 6-6" opacity=".8" /><circle cx="14" cy="14" r="1.500" fill="#fff" /></svg>
      </button>
      <button aria-label="Volume" className="flex w-[29px] justify-center">
        <svg width="20" height="16" fill="none" stroke="#fff" strokeWidth="1.200"><path d="M1 5h3l4-4v14l-4-4H1zM11 5c1.500 2 1.500 4 0 6M14 3c2.500 3 2.500 7 0 10" /><path d="M17 1c3 4 3 10 0 14" opacity=".4" /></svg>
      </button>
      <button className="w-[42px] text-center">HUN</button>
      <div className="w-[85px] pl-[6px] text-center leading-[23px]">
        <div>11:36 AM</div>
        <div>10/25/2022</div>
      </div>
      <button aria-label="Notifications" className="flex w-[55px] justify-center">
        <svg width="21" height="20" fill="none" stroke="#fff" strokeWidth="1.500"><path d="M1 1h19v14h-6.500L10.500 19l-3-4H1z" /></svg>
      </button>
      <div className="mr-[5px] ml-[8px] h-[50px] w-px bg-[#555]" />
    </div>
  </div>
);

const App: React.FC = () => {
  return (
    <div className="flex h-screen w-full flex-col overflow-hidden bg-[#f0f0f0] font-['Open_Sans','Noto_Sans',sans-serif] text-black">
      <TitleBar />
      <MenuBar />
      <Toolbar />
      <Timeframes />
      <Docks />
      <Tester />
      <StatusBar />
      <Taskbar />
    </div>
  );
};

export default App;
